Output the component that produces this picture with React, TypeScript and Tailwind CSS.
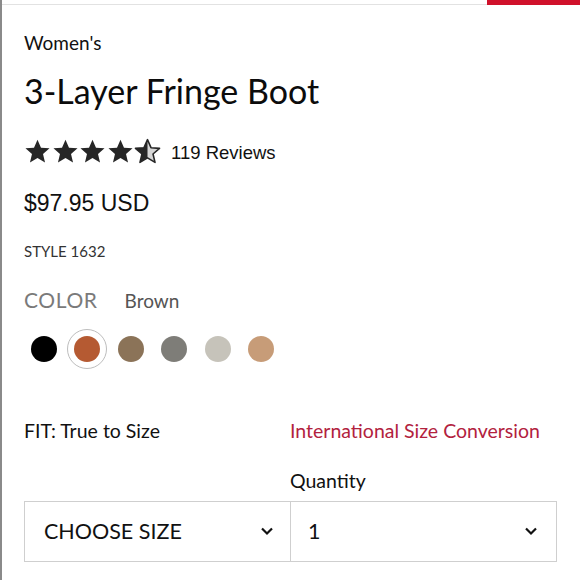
import React from "react";

const futura = { fontFamily: "Lato, 'Noto Sans', sans-serif" };
const helv = { fontFamily: "'Liberation Sans', Arial, sans-serif" };

const swatches = ["#000000", "#b55a32", "#8b7358", "#7e7d78", "#c6c3ba", "#c79c78"];

function Star({ half = false }: { half?: boolean }) {
    const d = "M12 1.5l3.1 7.1 7.6.6-5.8 5 1.8 7.5L12 17.7l-6.7 4 1.8-7.5-5.8-5 7.6-.6z";
    return (
        <svg width="27" height="27" viewBox="0 0 24 24">
            <defs>
                <clipPath id="lefthalf">
                    <rect x="0" y="0" width="12" height="24" />
                </clipPath>
            </defs>
            {half ? (
                <>
                    <path d={d} fill="#d6d6d6" stroke="#262626" strokeWidth="1.4" strokeLinejoin="round" />
                    <path d={d} fill="#262626" clipPath="url(#lefthalf)" />
                </>
            ) : (
                <path d={d} fill="#262626" />
            )}
        </svg>
    );
}

function Chevron() {
    return (
        <svg width="14" height="10" viewBox="0 0 14 10">
            <path d="M2 2.5l5 5 5-5" fill="none" stroke="#111" strokeWidth="2.2" />
        </svg>
    );
}

export default function App() {
    return (
        <div className="w-[580px] h-[580px] bg-white border-l-2 border-[#8a8a8a] overflow-hidden relative" style={futura}>
            <div className="flex h-[5px]">
                <div className="flex-1 border-b border-[#e2e2e2]"></div>
                <div className="w-[93px] bg-[#d0112b]"></div>
            </div>

            <div className="pl-[22px] pr-6">
                <p className="mt-[26px] text-[19px] leading-6 text-[#111]">Women's</p>
                <h1 className="mt-[16px] text-[34px] leading-10 text-[#0c0c0c]">3-Layer Fringe Boot</h1>

                <div className="mt-[25px] flex items-center">
                    <div className="flex gap-[0.5px]">
                        <Star />
                        <Star />
                        <Star />
                        <Star />
                        <Star half />
                    </div>
                    <span className="ml-[10px] mt-[3px] text-[18.5px] text-[#111]" style={helv}>119 Reviews</span>
                </div>

                <p className="mt-[22px] text-[23px] leading-7 text-[#111]" style={helv}>$97.95 USD</p>

                <p className="mt-[24px] text-[15px] leading-5 text-[#333]">STYLE 1632</p>

                <div className="mt-[23px] flex items-baseline">
                    <span className="text-[21px] tracking-[0.6px] text-[#7a7a7a]">COLOR</span>
                    <span className="ml-[27px] text-[19px] text-[#555]">Brown</span>
                </div>

                <div className="mt-[14px] flex items-center">
                    {swatches.map((c, i) => (
                        <div key={c} className={`w-[40px] h-[40px] rounded-full flex items-center justify-center mr-[3.4px] ${i === 1 ? "border-[1.5px] border-[#bdbdbd]" : ""}`}>
                            <div className="w-[26px] h-[26px] rounded-full" style={{ backgroundColor: c }}></div>
                        </div>
                    ))}
                </div>

                <div className="mt-[47px] flex">
                    <span className="w-[266px] text-[19.5px] text-[#111]">FIT: True to Size</span>
                    <span className="text-[19.5px] text-[#b2223e]">International Size Conversion</span>
                </div>

                <p className="mt-[20px] ml-[266px] text-[19.5px] text-[#111]">Quantity</p>

                <div className="mt-[6px] flex w-[533px] h-[61px] border border-[#cfcfcf]">
                    <div className="w-[266px] flex items-center justify-between pl-[19px] pr-[16px] border-r border-[#cfcfcf]">
                        <span className="text-[21.5px] text-[#111]">CHOOSE SIZE</span>
                        <Chevron />
                    </div>
                    <div className="flex-1 flex items-center justify-between pl-[17px] pr-[18px]">
                        <span className="text-[21.5px] text-[#111]">1</span>
                        <Chevron />
                    </div>
                </div>
            </div>
        </div>
    );
}
